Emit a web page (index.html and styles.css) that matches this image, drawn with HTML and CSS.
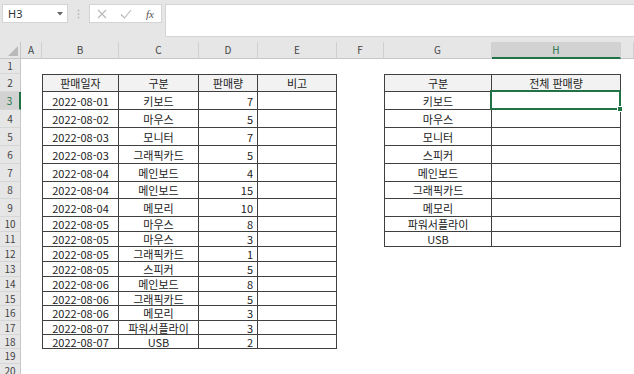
FILE: index.html
```html
<!DOCTYPE html>
<html lang="ko">
<head>
    <meta charset="UTF-8">
    <meta name="viewport" content="width=device-width, initial-scale=1.0">
    <title>판매 집계</title>
    <link rel="stylesheet" href="styles.css">
</head>
<body>
    <div class="toolbar">
        <div class="namebox">
            <span>H3</span>
            <svg class="caret" width="6" height="4" viewBox="0 0 6 4"><path d="M0 0h6L3 3.5z" fill="#666"/></svg>
        </div>
        <div class="grip">
            <svg width="3" height="10" viewBox="0 0 3 10"><circle cx="1.5" cy="1.5" r="0.9" fill="#bbb"/><circle cx="1.5" cy="5" r="0.9" fill="#bbb"/><circle cx="1.5" cy="8.5" r="0.9" fill="#bbb"/></svg>
        </div>
        <div class="fxbox">
            <svg class="btn" width="10" height="10" viewBox="0 0 10 10"><path d="M1 1l8 8M9 1l-8 8" stroke="#b8b8b8" stroke-width="1.1" fill="none"/></svg>
            <svg class="btn" width="12" height="10" viewBox="0 0 12 10"><path d="M1 5.5l3.5 3.5L11 1" stroke="#b8b8b8" stroke-width="1.1" fill="none"/></svg>
            <span class="fx">fx</span>
        </div>
        <div class="formula"></div>
    </div>

    <table class="sheet">
        <colgroup>
            <col style="width:21px">
            <col style="width:21px">
            <col style="width:77px">
            <col style="width:80px">
            <col style="width:59px">
            <col style="width:79px">
            <col style="width:47px">
            <col style="width:108px">
            <col style="width:129px">
            <col style="width:13px">
        </colgroup>
        <thead>
            <tr>
                <th class="corner"></th>
                <th>A</th><th>B</th><th>C</th><th>D</th><th>E</th><th>F</th><th>G</th><th class="active">H</th><th></th>
            </tr>
        </thead>
        <tbody>
            <tr class="r1"><th>1</th><td></td><td></td><td></td><td></td><td></td><td></td><td></td><td></td><td></td></tr>
            <tr class="tall">
                <th>2</th><td></td>
                <td class="b l t hd">판매일자</td><td class="b t hd">구분</td><td class="b t hd">판매량</td><td class="b t hd">비고</td>
                <td></td>
                <td class="b l t hd">구분</td><td class="b t hd">전체 판매량</td><td></td>
            </tr>
            <tr class="tall">
                <th class="active">3</th><td></td>
                <td class="b l">2022-08-01</td><td class="b">키보드</td><td class="b num">7</td><td class="b"></td>
                <td></td>
                <td class="b l">키보드</td><td class="b sel-cell"><div class="sel"><span class="handle"></span></div></td><td></td>
            </tr>
            <tr class="tall">
                <th>4</th><td></td>
                <td class="b l">2022-08-02</td><td class="b">마우스</td><td class="b num">5</td><td class="b"></td>
                <td></td>
                <td class="b l">마우스</td><td class="b"></td><td></td>
            </tr>
            <tr class="tall">
                <th>5</th><td></td>
                <td class="b l">2022-08-03</td><td class="b">모니터</td><td class="b num">7</td><td class="b"></td>
                <td></td>
                <td class="b l">모니터</td><td class="b"></td><td></td>
            </tr>
            <tr class="tall">
                <th>6</th><td></td>
                <td class="b l">2022-08-03</td><td class="b">그래픽카드</td><td class="b num">5</td><td class="b"></td>
                <td></td>
                <td class="b l">스피커</td><td class="b"></td><td></td>
            </tr>
            <tr class="tall">
                <th>7</th><td></td>
                <td class="b l">2022-08-04</td><td class="b">메인보드</td><td class="b num">4</td><td class="b"></td>
                <td></td>
                <td class="b l">메인보드</td><td class="b"></td><td></td>
            </tr>
            <tr class="mid">
                <th>8</th><td></td>
                <td class="b l">2022-08-04</td><td class="b">메인보드</td><td class="b num">15</td><td class="b"></td>
                <td></td>
                <td class="b l">그래픽카드</td><td class="b"></td><td></td>
            </tr>
            <tr class="tall">
                <th>9</th><td></td>
                <td class="b l">2022-08-04</td><td class="b">메모리</td><td class="b num">10</td><td class="b"></td>
                <td></td>
                <td class="b l">메모리</td><td class="b"></td><td></td>
            </tr>
            <tr>
                <th>10</th><td></td>
                <td class="b l">2022-08-05</td><td class="b">마우스</td><td class="b num">8</td><td class="b"></td>
                <td></td>
                <td class="b l">파워서플라이</td><td class="b"></td><td></td>
            </tr>
            <tr>
                <th>11</th><td></td>
                <td class="b l">2022-08-05</td><td class="b">마우스</td><td class="b num">3</td><td class="b"></td>
                <td></td>
                <td class="b l">USB</td><td class="b"></td><td></td>
            </tr>
            <tr>
                <th>12</th><td></td>
                <td class="b l">2022-08-05</td><td class="b">그래픽카드</td><td class="b num">1</td><td class="b"></td>
                <td></td><td></td><td></td><td></td>
            </tr>
            <tr>
                <th>13</th><td></td>
                <td class="b l">2022-08-05</td><td class="b">스피커</td><td class="b num">5</td><td class="b"></td>
                <td></td><td></td><td></td><td></td>
            </tr>
            <tr>
                <th>14</th><td></td>
                <td class="b l">2022-08-06</td><td class="b">메인보드</td><td class="b num">8</td><td class="b"></td>
                <td></td><td></td><td></td><td></td>
            </tr>
            <tr class="short">
                <th>15</th><td></td>
                <td class="b l">2022-08-06</td><td class="b">그래픽카드</td><td class="b num">5</td><td class="b"></td>
                <td></td><td></td><td></td><td></td>
            </tr>
            <tr>
                <th>16</th><td></td>
                <td class="b l">2022-08-06</td><td class="b">메모리</td><td class="b num">3</td><td class="b"></td>
                <td></td><td></td><td></td><td></td>
            </tr>
            <tr class="short">
                <th>17</th><td></td>
                <td class="b l">2022-08-07</td><td class="b">파워서플라이</td><td class="b num">3</td><td class="b"></td>
                <td></td><td></td><td></td><td></td>
            </tr>
            <tr class="short">
                <th>18</th><td></td>
                <td class="b l">2022-08-07</td><td class="b">USB</td><td class="b num">2</td><td class="b"></td>
                <td></td><td></td><td></td><td></td>
            </tr>
            <tr><th>19</th><td></td><td></td><td></td><td></td><td></td><td></td><td></td><td></td><td></td></tr>
            <tr><th>20</th><td></td><td></td><td></td><td></td><td></td><td></td><td></td><td></td><td></td></tr>
        </tbody>
    </table>
</body>
</html>
```

FILE: styles.css
```css
* {
    box-sizing: border-box;
}

body {
    margin: 0;
    background: #fff;
    font-family: "Noto Sans CJK KR", "Noto Sans", sans-serif;
    color: #222;
    overflow: hidden;
}

/* formula bar */
.toolbar {
    display: flex;
    align-items: flex-start;
    height: 42px;
    padding-top: 4px;
    background: #e6e6e6;
}

.namebox {
    display: flex;
    align-items: center;
    justify-content: space-between;
    width: 66px;
    height: 19px;
    margin-left: 2px;
    padding: 0 4px 0 5px;
    background: #fff;
    border: 1px solid #d4d4d4;
    font-family: "Noto Sans", sans-serif;
    font-size: 11px;
    color: #333;
}

.grip {
    display: flex;
    align-items: center;
    justify-content: center;
    width: 21px;
    height: 19px;
}

.fxbox {
    display: flex;
    align-items: center;
    width: 73px;
    height: 19px;
    background: #fff;
    border: 1px solid #d4d4d4;
    padding-left: 7px;
    gap: 13px;
}

.fx {
    font-family: "Liberation Serif", serif;
    font-style: italic;
    font-size: 11px;
    color: #555;
    margin-left: 1px;
}

.formula {
    flex: 1;
    height: 33px;
    margin-left: 3px;
    background: #fff;
    border: 1px solid #d4d4d4;
    border-right: none;
}

/* sheet grid */
.sheet {
    table-layout: fixed;
    width: 634px;
    border-collapse: separate;
    border-spacing: 0;
    font-size: 11px;
}

.sheet thead th {
    height: 17px;
    padding: 0;
    background: #e6e6e6;
    border-right: 1px solid #d0d0d0;
    border-bottom: 1px solid #c6c6c6;
    font-weight: normal;
    font-size: 10px;
    line-height: 12px;
    color: #444;
}

.sheet thead th.corner {
    position: relative;
    border-right-color: #c6c6c6;
}

.corner::after {
    content: "";
    position: absolute;
    right: 2px;
    bottom: 2px;
    width: 10px;
    height: 10px;
    background: #b9b9b9;
    clip-path: polygon(100% 0, 100% 100%, 0 100%);
}

.sheet thead th.active {
    background: #d2d2d2;
    border-bottom: 2px solid #217346;
    color: #217346;
}

.sheet tbody th {
    padding: 0;
    background: #e6e6e6;
    border-right: 1px solid #c6c6c6;
    border-bottom: 1px solid #d6d6d6;
    font-weight: normal;
    font-size: 10px;
    line-height: 12px;
    color: #444;
}

.sheet tbody th.active {
    background: #d2d2d2;
    border-right: 2px solid #217346;
    color: #217346;
}

.sheet td {
    padding: 0 3px;
    line-height: 12px;
    text-align: center;
    white-space: nowrap;
    overflow: visible;
}

.sheet tr {
    height: 15px;
}

.sheet tr.r1 {
    height: 15px;
}

.sheet tr.tall {
    height: 18px;
}

.sheet tr.mid {
    height: 17px;
}

.sheet tr.short {
    height: 14px;
}

.sheet td.b {
    border-right: 1px solid #404040;
    border-bottom: 1px solid #404040;
}

.sheet td.l {
    border-left: 1px solid #404040;
}

.sheet td.t {
    border-top: 1px solid #404040;
}

.sheet td.hd {
    background: #f2f2f2;
}

.sheet td.num {
    text-align: right;
    padding-right: 4px;
}

.sel-cell {
    position: relative;
}

.sel {
    position: absolute;
    left: -2px;
    top: -2px;
    right: -1px;
    bottom: -1px;
    border: 2px solid #217346;
}

.handle {
    position: absolute;
    right: -4px;
    bottom: -4px;
    width: 6px;
    height: 6px;
    background: #217346;
    border: 1px solid #fff;
}
```
